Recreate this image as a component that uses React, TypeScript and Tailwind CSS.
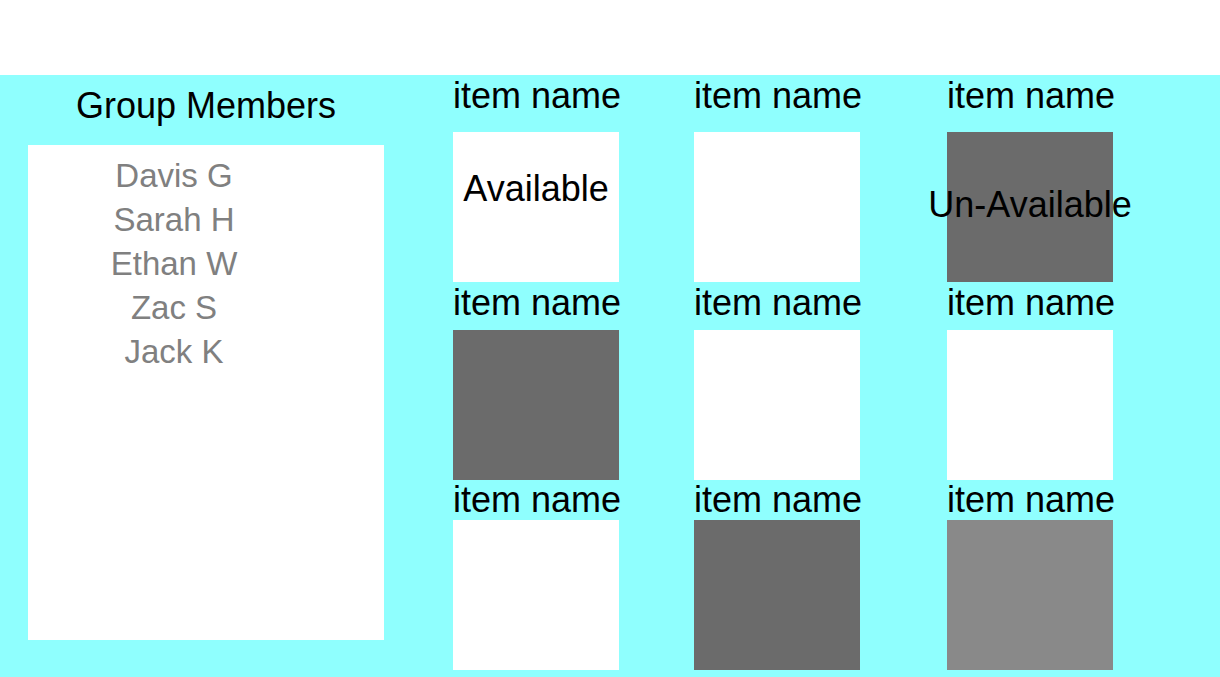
const members = ["Davis G", "Sarah H", "Ethan W", "Zac S", "Jack K"];

type Item = { tone: "white" | "dark" | "mid"; note?: string; centered?: boolean };

const rows: { labelClass: string; boxClass: string; items: Item[] }[] = [
  {
    labelClass: "mt-px",
    boxClass: "mt-4",
    items: [
      { tone: "white", note: "Available" },
      { tone: "white" },
      { tone: "dark", note: "Un-Available", centered: true },
    ],
  },
  {
    labelClass: "mt-px",
    boxClass: "mt-[7px]",
    items: [{ tone: "dark" }, { tone: "white" }, { tone: "white" }],
  },
  {
    labelClass: "mt-0",
    boxClass: "mt-0",
    items: [{ tone: "white" }, { tone: "dark" }, { tone: "mid" }],
  },
];

const colGap = ["ml-0", "ml-[75px]", "ml-[87px]"];

const toneClass = {
  white: "bg-white",
  dark: "bg-[#6b6b6b]",
  mid: "bg-[#898989]",
};

function ItemCard({ item, rowIdx, colIdx }: { item: Item; rowIdx: number; colIdx: number }) {
  const row = rows[rowIdx];
  return (
    <div className={`w-[166px] flex flex-col ${colGap[colIdx]}`}>
      <p className={`${row.labelClass} text-[36px] leading-[40px] text-black text-center whitespace-nowrap`}>
        item name
      </p>
      <div
        className={`${row.boxClass} h-[150px] w-[166px] ${toneClass[item.tone]} flex flex-col items-center ${
          item.centered ? "justify-center pb-1" : "justify-start pt-[37px]"
        }`}
      >
        {item.note && (
          <span className="text-[36px] leading-[40px] text-black whitespace-nowrap">{item.note}</span>
        )}
      </div>
    </div>
  );
}

export default function App() {
  return (
    <div
      className="w-[1220px] h-[677px] bg-white flex flex-col overflow-hidden"
      style={{ fontFamily: '"Liberation Sans", Arial, sans-serif' }}
    >
      <div className="h-[75px] shrink-0" />

      <div className="flex-1 bg-[#8ffffe] flex">
        {/* members panel */}
        <div className="ml-[28px] w-[356px] flex flex-col">
          <h2 className="mt-[11px] text-[36px] leading-[40px] text-black text-center">Group Members</h2>
          <div className="mt-[19px] h-[495px] bg-white pt-[9px] pr-[64px]">
            <ul className="flex flex-col">
              {members.map((m) => (
                <li key={m} className="text-[33px] leading-[44px] text-[#808080] text-center">
                  {m}
                </li>
              ))}
            </ul>
          </div>
        </div>

        {/* items grid */}
        <div className="ml-[69px] flex flex-col">
          {rows.map((row, r) => (
            <div key={r} className="flex">
              {row.items.map((item, c) => (
                <ItemCard key={c} item={item} rowIdx={r} colIdx={c} />
              ))}
            </div>
          ))}
        </div>
      </div>
    </div>
  );
}
